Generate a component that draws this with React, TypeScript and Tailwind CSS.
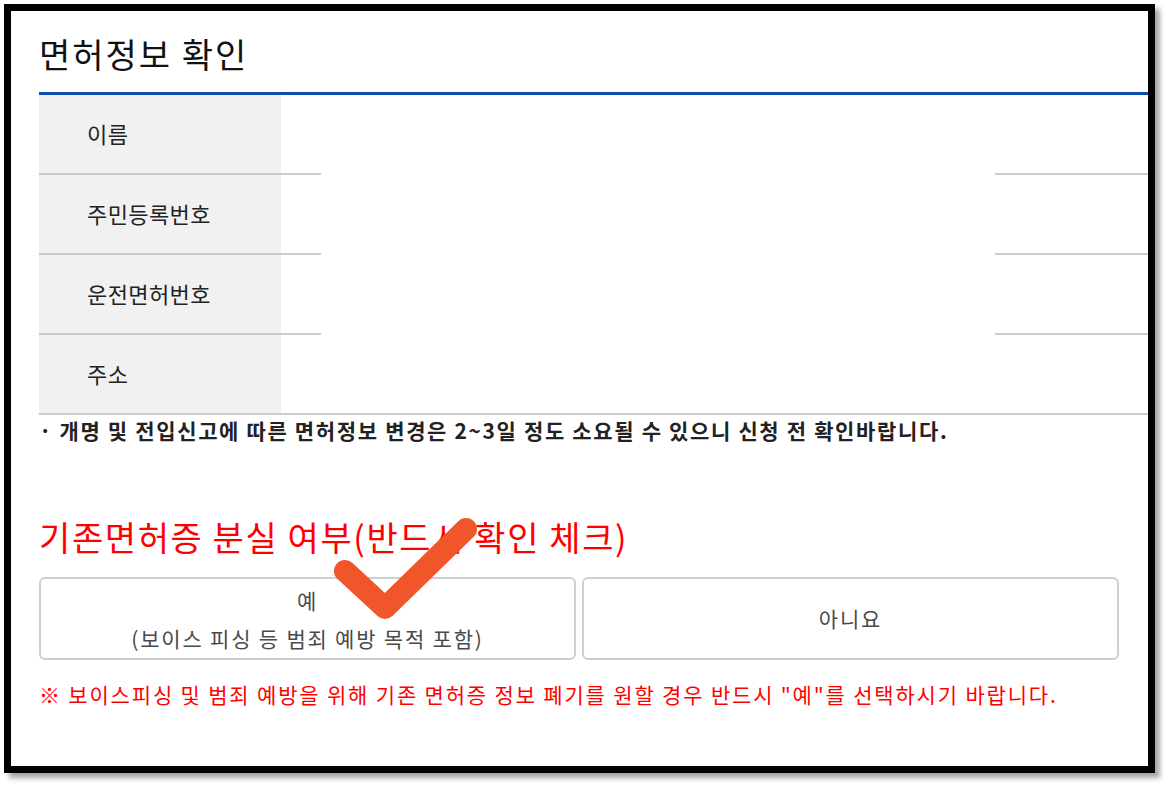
import React from 'react';

const font = "font-['Noto_Sans_CJK_KR','Noto_Sans',sans-serif]";

const rows = ['이름', '주민등록번호', '운전면허번호', '주소'];

function InfoRow({ label, last }: { label: string; last: boolean }) {
  return (
    <div className="flex h-[80px]">
      <div className="w-[242px] bg-[#f1f1f1] border-b-2 border-[#cccccc] flex items-center pl-[48px] pb-[2px] text-[22px] tracking-[0.4px] text-[#222]">
        {label}
      </div>
      <div className="flex-1 flex">
        <div className="w-[40px] border-b-2 border-[#cccccc]" />
        <div className={last ? 'flex-1 border-b-2 border-[#cccccc]' : 'flex-1'} />
        <div className="w-[153px] border-b-2 border-[#cccccc]" />
      </div>
    </div>
  );
}

export default function App() {
  return (
    <div className={`relative w-[1166px] h-[787px] bg-white ${font}`}>
      <div className="absolute left-[4px] top-[4px] w-[1151px] h-[769px] border-[7px] border-black bg-white shadow-[5px_5px_5px_rgba(0,0,0,0.35)]">
        <div className="pl-[28px]">
          <div className="h-[81px] flex items-center pt-[4px] text-[34px] tracking-[2px] text-[#111]">면허정보 확인</div>
          <div className="h-[3px] bg-[#0a4fb0]" />
          {rows.map((r, i) => (
            <InfoRow key={r} label={r} last={i === rows.length - 1} />
          ))}
          <p className="mt-[4px] leading-[22px] text-[21px] tracking-[1.65px] font-bold text-[#222]">
            · 개명 및 전입신고에 따른 면허정보 변경은 2~3일 정도 소요될 수 있으니 신청 전 확인바랍니다.
          </p>
          <h2 className="mt-[76px] leading-[40px] text-[34px] tracking-[1.6px] text-[#ff0000]">
            기존면허증 분실 여부(반드시 확인 체크)
          </h2>
          <div className="mt-[20px] mr-[29px] flex gap-[6px]">
            <button className="flex-1 h-[83px] border-2 border-[#cfcfcf] rounded-[6px] flex flex-col items-center justify-center text-[21px] tracking-[1.8px] leading-[38px] text-[#4a4a4a]">
              <span>예</span>
              <span>(보이스 피싱 등 범죄 예방 목적 포함)</span>
            </button>
            <button className="flex-1 h-[83px] border-2 border-[#cfcfcf] rounded-[6px] flex items-center justify-center text-[21px] tracking-[1.8px] text-[#4a4a4a]">
              아니요
            </button>
          </div>
          <p className="mt-[22px] leading-[24px] text-[21px] tracking-[1.82px] text-[#ff0000]">
            ※ 보이스피싱 및 범죄 예방을 위해 기존 면허증 정보 폐기를 원할 경우 반드시 "예"를 선택하시기 바랍니다.
          </p>
        </div>
      </div>
      <svg className="absolute left-0 top-0 pointer-events-none" width="1166" height="787">
        <polyline
          points="345,571 385,608 466,529"
          fill="none"
          stroke="#f1562b"
          strokeWidth="22"
          strokeLinecap="round"
          strokeLinejoin="round"
        />
      </svg>
    </div>
  );
}
